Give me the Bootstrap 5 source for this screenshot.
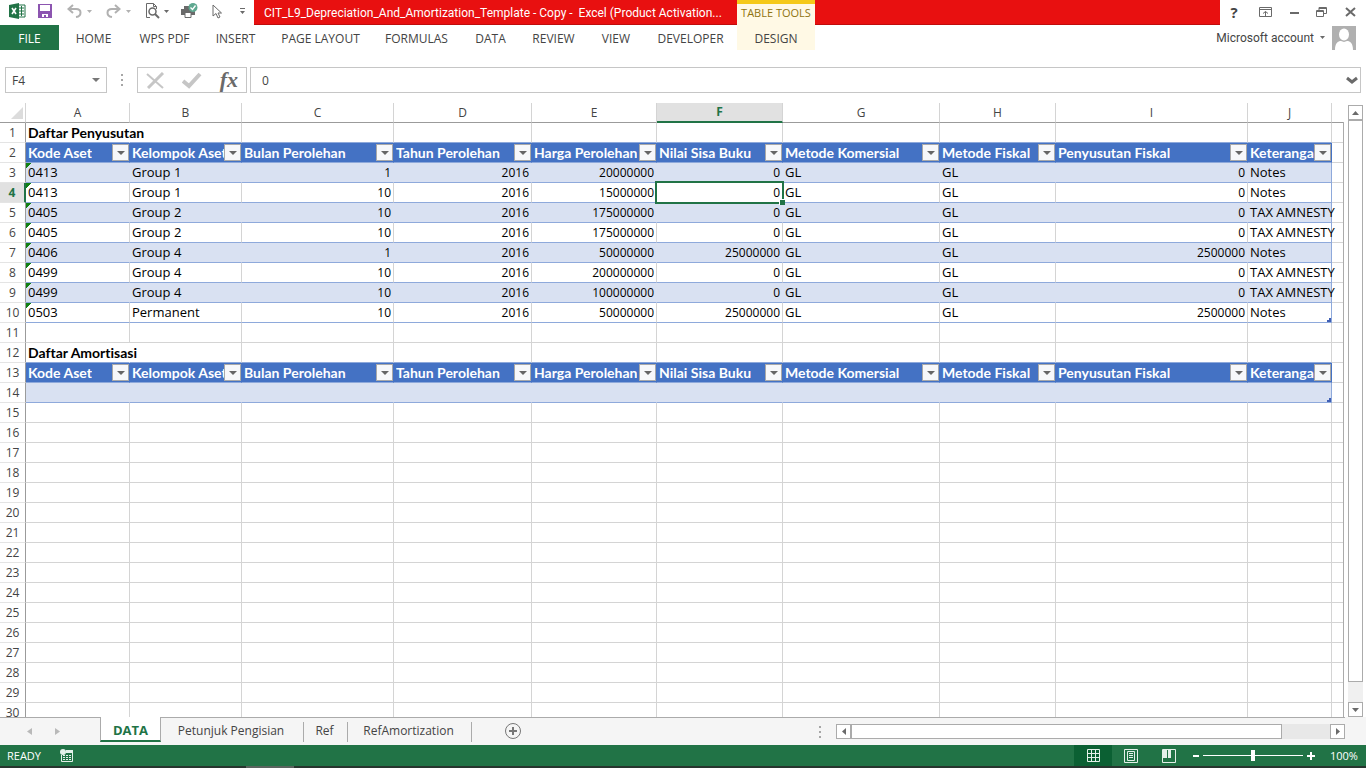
<!DOCTYPE html>
<html lang="en">
<head>
<meta charset="utf-8">
<meta name="viewport" content="width=device-width, initial-scale=1">
<title>CIT_L9_Depreciation_And_Amortization_Template - Copy - Excel</title>
<link href="https://cdn.jsdelivr.net/npm/bootstrap@5.3.0/dist/css/bootstrap.min.css" rel="stylesheet">
<style>
:root{--xl:#217346;--line:#d4d4d4;--edge:#ababab;--ui:"Open Sans","Noto Sans",sans-serif}
body{font-family:var(--ui);font-size:12px;line-height:16px;color:#444;background:#fff}
button{background:none;border:0;padding:0;color:inherit;font:inherit}
svg{display:block}
.app-title{height:25px}
.qat{width:254px;padding-left:1px}
.qat button{height:22px;display:flex;align-items:center;justify-content:center}
.title-text{width:483px;padding:2px 0 0 10px;font-family:Roboto,sans-serif;color:#fff;white-space:pre}
.title-bg{background:#e81010;border-bottom:1px solid #c00c0c}
.tools-tab{width:78px;background:#fff9e5;border-top:4px solid #f5c918;color:#8f7410;font-size:11px;padding-bottom:3px}
.win{width:146px;padding:0 10px 2px 7px}
.ribbon{height:25px;margin-bottom:17px}
.ribbon-tabs{display:grid;grid-template-columns:59px 69px 73px 69px 101px 91px 57px 69px 56px 93px 78px}
.ribbon-tabs .file{background:var(--xl);color:#fff}
.ribbon-tabs .ctx{background:#fff9e5}
.ribbon-tabs button{white-space:nowrap;padding-top:2px}
.account{font-family:Roboto,sans-serif}
.fbar{height:26px;margin-bottom:10px;padding:0 5px}
.box{border:1px solid #c6c6c6}
.box input{border:0;outline:0;background:none;min-width:0;color:#444;padding-top:2px}
.fx{font:italic bold 22px/22px "Liberation Serif",serif;color:#6a6a6a}
.workspace{min-height:0}
.sheet-wrap{min-width:0;overflow:hidden;position:relative}
.sheet-wrap::after{content:"";position:absolute;right:0;top:19px;bottom:0;border-right:1px solid var(--edge)}
.grid{table-layout:fixed;border-collapse:separate;border-spacing:0;width:100%;color:#000;font-size:13px;line-height:19px}
.grid th,.grid td{height:20px;padding:0 2px;white-space:nowrap;border-right:1px solid var(--line);border-bottom:1px solid var(--line)}
.grid thead th{border-bottom-color:#9b9b9b;font-weight:400;font-size:12px;line-height:18px;padding-top:0;text-align:center;color:#444}
.grid thead th:last-child,.grid td:last-child{border-right:0}
.grid .rh{font-weight:400;font-size:12px;text-align:center;color:#444;border-right-color:#9b9b9b;border-bottom-color:#e4e4e4;padding:0}
.grid thead th.on{background:#e1e1e1;color:var(--xl);font-weight:700;border-bottom:2px solid var(--xl)}
.grid .rh.on{background:#e1e1e1;color:var(--xl);font-weight:700;border-right:2px solid var(--xl)}
.grid thead .corner{border-right-color:#d4d4d4}
.corner svg{margin-left:auto}
.grid .n{text-align:right;font-size:12px}
.grid .ttl{font:bold 14px/19px Lato,sans-serif;font-variant-ligatures:none;border-right-color:transparent}
.grid .pre td:not(:last-child){border-bottom-color:#8ea9db}
.grid .hd td.c{font:bold 14px/19px Lato,sans-serif;background:#4472c4;color:#fff;border-right-color:#4472c4;border-bottom-color:#8ea9db;padding-right:0}
.hd .lbl{overflow:hidden;min-width:0}
.filter{width:17px;height:17px;flex:none;background:#f7f8fa;border:1px solid #a9a9a9;display:flex;align-items:center;justify-content:center}
.grid .dt td.c{border-bottom-color:#8ea9db}
.grid .band td.c{background-color:#d9e1f2;border-right-color:#d9e1f2}
.grid .dt td.endc{border-right-color:#8ea9db}
.grid .err{background-image:linear-gradient(135deg,#128012 4px,transparent 4px)}
.grid .sel{position:relative}
.sel::before{content:"";position:absolute;inset:-2px;border:2px solid var(--xl)}
.sel::after{content:"";position:absolute;right:-3px;bottom:-3px;width:6px;height:6px;background:var(--xl);border:solid #fff;border-width:1px 0 0 1px}
.grid .corner-mark{background-image:linear-gradient(#3f5fb5,#3f5fb5),linear-gradient(#3f5fb5,#3f5fb5);background-size:4px 2px,2px 4px;background-position:right bottom;background-repeat:no-repeat}
.vscroll{width:22px;padding:2px 3px 0 4px}
.sbtn{border:1px solid var(--edge);background:#fff;width:15px;height:15px;flex:none;display:flex;align-items:center;justify-content:center}
.thumb{border:1px solid var(--edge);background:#fff}
.vtrack{background:#f0f0f0}
.vtrack .thumb{height:96.5%}
.sheets{height:28px;background:#f5f5f5}
.sheets .strip{border-top:1px solid var(--edge)}
.sheets .stab{height:20px;margin-top:4px;border-right:1px solid var(--edge);padding:0 2px 2px 0}
.sheets .active{width:61px;height:25px;margin-top:-1px;padding:2px 0 0;background:#fff;border:solid var(--edge);border-width:0 1px;border-bottom:2px solid var(--xl);color:var(--xl);font-weight:700;font-size:13px}
.htrack{background:#e8e8e8;height:15px}
.htrack .thumb{width:90%}
.status{height:21px;background:var(--xl);color:#fff;font-size:11px}
.status .view{width:38px;height:21px;display:flex;align-items:center;justify-content:center}
.status .view.cur{background:#0b6033}
.zoomer{appearance:none;width:100px;height:15px;background:linear-gradient(#fff,#fff) center/100% 1px no-repeat;margin:0}
.zoomer::-webkit-slider-thumb{appearance:none;width:4px;height:11px;background:#fff;border:0;border-radius:0}
.desk{height:2px;background:#27352e}
.desk div{width:48px;margin-left:246px;background:#59645e}
</style>
</head>
<body>
<div class="d-flex flex-column vh-100 overflow-hidden">
 <header class="app-title d-flex flex-shrink-0">
  <div class="qat d-flex flex-shrink-0">
   <button style="width:36px" aria-label="Excel"><svg width="17" height="16" viewBox="0 0 17 16"><path d="M9 2h7v12H9z" fill="#fff" stroke="#217346"/><path d="M10 5h5M10 8h5M10 11h5M12.5 3v10" stroke="#217346"/><path d="M0 2 10 0v16L0 14z" fill="#217346"/><path d="m3 5 4 6M7 5l-4 6" stroke="#fff" stroke-width="1.6"/></svg></button>
   <button style="width:22px" aria-label="Save"><svg width="14" height="14" viewBox="0 0 14 14"><path d="M0 0h14v14H0z" fill="#8c55b0"/><path d="M2 1h10v6H2zM4 10h6v3H8v-2H6v2H4z" fill="#fff"/></svg></button>
   <button style="width:40px" aria-label="Undo"><svg width="15" height="14" viewBox="0 0 15 14" fill="none" stroke="#b1b1b1" stroke-width="2"><path d="M6 1 1.500 5 6 9M2 5h7c6 0 6 7 0 8"/></svg></button>
   <button style="width:5px;margin-left:-6px" aria-label="Undo list"><svg width="5" height="3"><path d="M0 0h5L2.500 3z" fill="#b1b1b1"/></svg></button>
   <button style="width:40px;margin-left:3px" aria-label="Redo"><svg width="15" height="14" viewBox="0 0 15 14" fill="none" stroke="#b1b1b1" stroke-width="2"><path d="m9 1 4.500 4L9 9m4-4H6c-6 0-6 7 0 8"/></svg></button>
   <button style="width:5px;margin-left:-6px" aria-label="Redo list"><svg width="5" height="3"><path d="M0 0h5L2.500 3z" fill="#b1b1b1"/></svg></button>
   <button style="width:46px" aria-label="Print preview"><svg width="15" height="16" viewBox="0 0 15 16" fill="none" stroke="#6a6a6a"><path d="M5 14.500H1.500V.5h7l3 3V6M8.500.5v3h3"/><circle cx="7.500" cy="8.500" r="3.500" stroke-width="1.500"/><path d="m10 11 4 4" stroke-width="2"/></svg></button>
   <button style="width:5px;margin-left:-10px" aria-label="Preview list"><svg width="5" height="3"><path d="M0 0h5L2.500 3z" fill="#6a6a6a"/></svg></button>
   <button style="width:44px" aria-label="Quick print"><svg width="17" height="16" viewBox="0 0 17 16"><path d="M0 6h14v6H0zM3 3h5v4H3z" fill="#6a6a6a"/><path d="M4 9.500h6v5H4z" fill="#fff" stroke="#6a6a6a"/><circle cx="12" cy="4.500" r="4.500" fill="#5fa890"/><path d="m9.500 4.500 2 2 3-4" fill="none" stroke="#fff" stroke-width="1.300"/></svg></button>
   <button style="width:14px" aria-label="Select objects"><svg width="10" height="15" viewBox="0 0 10 15"><path d="M1 1v11l3-2.500L6 14l2-1-2-4h3.500z" fill="#fff" stroke="#6a6a6a"/></svg></button>
   <button class="ms-2" style="width:24px" aria-label="Customize toolbar"><svg width="5" height="6"><path d="M0 0h5v1H0zM0 3h5L2.500 6z" fill="#6a6a6a"/></svg></button>
  </div>
  <div class="title-bg title-text d-flex align-items-center">CIT_L9_Depreciation_And_Amortization_Template - Copy -  Excel (Product Activation...</div>
  <div class="tools-tab d-flex align-items-center justify-content-center flex-shrink-0">TABLE TOOLS</div>
  <div class="title-bg flex-grow-1"></div>
  <div class="win d-flex align-items-center justify-content-between flex-shrink-0">
   <button class="fw-bold" style="width:14px;font-size:15px" aria-label="Help">?</button>
   <button aria-label="Ribbon display options"><svg width="13" height="10" viewBox="0 0 13 10" fill="none" stroke="#6a6a6a"><path d="M.5.5h12v9H.5zM0 2.500h13M6.500 9V4.500M4 6.500l2.500-2L9 6.500"/></svg></button>
   <button aria-label="Minimize"><svg width="9" height="10"><path d="M0 5h9v2H0z" fill="#6a6a6a"/></svg></button>
   <button aria-label="Restore"><svg width="11" height="10" viewBox="0 0 11 10" fill="none" stroke="#6a6a6a"><path d="M.5 3.500h7v6h-7zM0 4.500h8M3 3V.5h7.500v6H8M3 1.500h7"/></svg></button>
   <button aria-label="Close"><svg width="11" height="10"><path d="m1 1 9 8M10 1 1 9" stroke="#6a6a6a" stroke-width="2"/></svg></button>
  </div>
 </header>
 <div class="ribbon d-flex justify-content-between flex-shrink-0">
  <nav class="ribbon-tabs" aria-label="Ribbon">
   <button class="file">FILE</button><button>HOME</button><button>WPS PDF</button><button>INSERT</button><button>PAGE LAYOUT</button><button>FORMULAS</button><button>DATA</button><button>REVIEW</button><button>VIEW</button><button>DEVELOPER</button><button class="ctx">DESIGN</button>
  </nav>
  <div class="d-flex align-items-center" style="padding-right:10px">
   <button class="account d-flex align-items-center" style="gap:6px">Microsoft account <svg width="5" height="3"><path d="M0 0h5L2.500 3z" fill="#6a6a6a"/></svg></button>
   <svg style="margin-left:7px" width="24" height="24" viewBox="0 0 24 24"><path d="M0 0h24v24H0z" fill="#b0b0b0"/><ellipse cx="12" cy="8.500" rx="5" ry="6" fill="#fff"/><path d="M3 24c0-7 3-9 6-9l3 1 3-1c3 0 6 2 6 9z" fill="#fff"/></svg>
  </div>
 </div>
 <div class="fbar d-flex flex-shrink-0">
  <div class="box d-flex align-items-center" style="width:102px"><input class="flex-grow-1 pe-0" style="width:80px;padding-left:6px" value="F4" aria-label="Name box"><button class="me-1" style="padding-right:2px" aria-label="Names"><svg width="8" height="4"><path d="M0 0h8L4 4z" fill="#777"/></svg></button></div>
  <div class="d-flex align-items-center justify-content-center" style="width:30px"><svg width="2" height="12"><path d="M0 0h2v2H0zM0 5h2v2H0zM0 10h2v2H0z" fill="#a6a6a6"/></svg></div>
  <div class="box d-flex align-items-center justify-content-between ps-2 pe-2" style="width:110px">
   <button aria-label="Cancel"><svg width="19" height="17" viewBox="0 0 19 17" fill="none" stroke="#c6c6c6"><path d="m1 2 16 14" stroke-width="2"/><path d="M17 1 2 16" stroke-width="3"/></svg></button>
   <button aria-label="Enter"><svg width="20" height="17" viewBox="0 0 20 17"><path d="m1 9 6 5L18 2" fill="none" stroke="#c6c6c6" stroke-width="4"/></svg></button>
   <button class="fx" aria-label="Insert function">fx</button>
  </div>
  <div class="box flex-grow-1 d-flex align-items-center" style="margin-left:3px"><input class="flex-grow-1" style="padding-left:11px" value="0" aria-label="Formula bar"><button style="margin-right:2px" aria-label="Expand formula bar"><svg width="12" height="9" viewBox="0 0 12 9"><path d="m1 2 5 4 5-4" fill="none" stroke="#6a6a6a" stroke-width="3"/></svg></button></div>
 </div>
 <main class="workspace d-flex flex-grow-1">
  <div class="sheet-wrap flex-grow-1">
   <table class="grid">
    <colgroup><col style="width:26px"><col style="width:104px"><col style="width:112px"><col style="width:152px"><col style="width:138px"><col style="width:125px"><col style="width:126px"><col style="width:157px"><col style="width:116px"><col style="width:192px"><col style="width:84px"><col></colgroup>
    <thead><tr id="cols"></tr></thead>
    <tbody id="rows"></tbody>
   </table>
  </div>
  <div class="vscroll d-flex flex-column flex-shrink-0">
   <button class="sbtn" aria-label="Scroll up"><svg width="7" height="4"><path d="M0 4h7L3.500 0z" fill="#6a6a6a"/></svg></button>
   <div class="vtrack flex-grow-1"><div class="thumb"></div></div>
   <button class="sbtn" aria-label="Scroll down"><svg width="7" height="4"><path d="M0 0h7L3.500 4z" fill="#6a6a6a"/></svg></button>
  </div>
 </main>
 <div class="sheets d-flex flex-shrink-0">
  <div class="strip d-flex flex-grow-1 align-items-start" style="margin-right:21px">
   <div class="d-flex align-items-center" style="width:100px;height:26px;padding-left:27px;gap:23px">
    <button aria-label="Previous sheet"><svg width="5" height="7"><path d="M5 0v7L0 3.500z" fill="#b9b9b9"/></svg></button><button aria-label="Next sheet"><svg width="5" height="7"><path d="M0 0v7l5-3.500z" fill="#b9b9b9"/></svg></button>
   </div>
   <button class="stab active">DATA</button>
   <button class="stab" style="width:143px">Petunjuk Pengisian</button>
   <button class="stab" style="width:44px">Ref</button>
   <button class="stab" style="width:124px">RefAmortization</button>
   <button style="margin:5px 0 0 33px" aria-label="New sheet"><svg width="16" height="16" viewBox="0 0 16 16" fill="none" stroke="#777"><circle cx="8" cy="8" r="7.500"/><path d="M8 4v8M4 8h8" stroke-width="2"/></svg></button>
   <div class="d-flex align-items-center ms-auto" style="width:526px;height:27px">
    <svg style="margin-right:15px" width="2" height="12"><path d="M0 0h2v2H0zM0 5h2v2H0zM0 10h2v2H0z" fill="#a6a6a6"/></svg>
    <button class="sbtn" aria-label="Scroll left"><svg width="4" height="7"><path d="M4 0v7L0 3.500z" fill="#6a6a6a"/></svg></button>
    <div class="htrack flex-grow-1"><div class="thumb h-100"></div></div>
    <button class="sbtn" aria-label="Scroll right"><svg width="4" height="7"><path d="M0 0v7l4-3.500z" fill="#6a6a6a"/></svg></button>
   </div>
  </div>
 </div>
 <footer class="status d-flex align-items-center flex-shrink-0">
  <span style="margin:0 19px 0 7px">READY</span>
  <button aria-label="Macro recording"><svg width="13" height="13" viewBox="0 0 13 13"><path d="M1.500 6v6.500h11v-11H6" fill="none" stroke="#e4f0e9"/><path d="M6 1h7v3H6z" fill="#e4f0e9"/><path d="M3 6.500h2M6 6.500h2M9 6.500h2M3 8.500h2M6 8.500h2M9 8.500h2M3 10.500h2M6 10.500h2M9 10.500h2" stroke="#e4f0e9"/><circle cx="3" cy="3" r="3" fill="#e4f0e9"/></svg></button>
  <div class="d-flex align-items-center ms-auto" style="width:292px">
   <button class="view cur" aria-label="Normal view"><svg width="13" height="13" viewBox="0 0 13 13" fill="none" stroke="#e4f0e9"><path d="M.5.5h12v12H.5zM4.500 0v13M8.500 0v13M0 4.500h13M0 8.500h13"/></svg></button>
   <button class="view" aria-label="Page layout view"><svg width="14" height="14" viewBox="0 0 14 14" fill="none" stroke="#e4f0e9"><path d="M.5.5h13v13H.5zM3.500 2.500h7v9h-7zM5 4.500h4M5 6.500h4M5 8.500h4"/></svg></button>
   <button class="view" aria-label="Page break view"><svg width="14" height="14" viewBox="0 0 14 14"><path d="M.5.5h13v13H.5z" fill="none" stroke="#e4f0e9"/><path d="M1 1h4v8H1zM6 1h3v8H6z" fill="#e4f0e9"/></svg></button>
   <button style="margin:0 4px 0 5px" aria-label="Zoom out"><svg width="6" height="2"><path d="M0 0h6v2H0z" fill="#fff"/></svg></button>
   <input class="zoomer" type="range" min="0" max="100" value="50" aria-label="Zoom">
   <button style="margin:0 15px 0 4px" aria-label="Zoom in"><svg width="8" height="8"><path d="M3 0h2v8H3zM0 3h8v2H0z" fill="#fff"/></svg></button>
   <button>100%</button>
  </div>
 </footer>
 <div class="desk d-flex flex-shrink-0"><div></div></div>
</div>
<script src="https://cdn.jsdelivr.net/npm/bootstrap@5.3.0/dist/js/bootstrap.bundle.min.js"></script>
<script>
const heads = ['Kode Aset','Kelompok Aset','Bulan Perolehan','Tahun Perolehan','Harga Perolehan','Nilai Sisa Buku','Metode Komersial','Metode Fiskal','Penyusutan Fiskal','Keterangan'];
const data = {
  3:['0413','Group 1',1,2016,20000000,0,'GL','GL',0,'Notes'],
  4:['0413','Group 1',10,2016,15000000,0,'GL','GL',0,'Notes'],
  5:['0405','Group 2',10,2016,175000000,0,'GL','GL',0,'TAX AMNESTY'],
  6:['0405','Group 2',10,2016,175000000,0,'GL','GL',0,'TAX AMNESTY'],
  7:['0406','Group 4',1,2016,50000000,25000000,'GL','GL',2500000,'Notes'],
  8:['0499','Group 4',10,2016,200000000,0,'GL','GL',0,'TAX AMNESTY'],
  9:['0499','Group 4',10,2016,100000000,0,'GL','GL',0,'TAX AMNESTY'],
  10:['0503','Permanent',10,2016,50000000,25000000,'GL','GL',2500000,'Notes'],
  14:Array(10).fill('')
};
const titles = {1:'Daftar Penyusutan', 12:'Daftar Amortisasi'};
const arrow = '<svg width="8" height="4"><path d="M0 0h8L4 4z" fill="#666"/></svg>';
document.getElementById('cols').innerHTML =
  '<th class="corner"><svg width="12" height="12" aria-hidden="true"><path d="M12 0v12H0z" fill="#dcdcdc"/></svg></th>' +
  [...'ABCDEFGHIJ'].map(c => `<th${c === 'F' ? ' class="on"' : ''}>${c}</th>`).join('') + '<th></th>';
let html = '';
for (let r = 1; r <= 30; r++) {
  const d = data[r];
  const head = r === 2 || r === 13;
  const kind = titles[r] ? 'pre' : head ? 'hd' : d ? 'dt' + (r % 2 || r === 14 ? ' band' : '') : '';
  html += `<tr class="${kind}"><th class="rh${r === 4 ? ' on' : ''}">${r}</th>`;
  for (let c = 0; c < 10; c++) {
    if (head) {
      html += `<td class="c"><div class="d-flex align-items-center justify-content-between"><span class="lbl">${heads[c]}</span><button class="filter" aria-label="Filter ${heads[c]}">${arrow}</button></div></td>`;
    } else if (d) {
      let k = 'c';
      if (typeof d[c] === 'number') k += ' n';
      if (c === 0 && d[c]) k += ' err';
      if (c === 9) k += ' endc';
      if (c === 9 && (r === 10 || r === 14)) k += ' corner-mark';
      if (r === 4 && c === 5) k += ' sel';
      html += `<td class="${k}">${d[c]}</td>`;
    } else {
      html += titles[r] && c === 0 ? `<td class="ttl">${titles[r]}</td>` : '<td></td>';
    }
  }
  html += '<td></td></tr>';
}
document.getElementById('rows').innerHTML = html;
</script>
</body>
</html>
